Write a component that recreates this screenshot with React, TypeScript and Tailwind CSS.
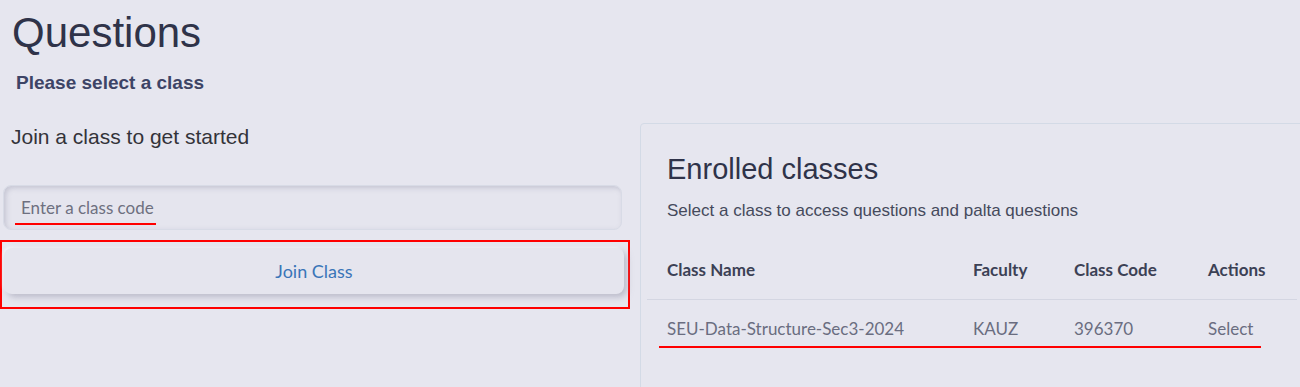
import React from "react";

export default function App() {
  const sans = { fontFamily: '"Liberation Sans", Arial, sans-serif' };
  const nun = { fontFamily: 'Lato, "Open Sans", sans-serif' };
  return (
    <div className="w-[1300px] h-[387px] overflow-hidden bg-[#e6e6ef]" style={sans}>
      <div className="pl-[12px] pt-[10px]">
        <h1 className="text-[42px] leading-[46px] text-[#2f3349]">Questions</h1>
        <p className="mt-[15px] pl-[4px] text-[19px] leading-[24px] font-bold text-[#3d4466]">Please select a class</p>
      </div>
      <div className="flex mt-[28px]">
        <div className="w-[640px] shrink-0">
          <div className="pl-[11px] pt-[2px] text-[21px] leading-[24px] text-[#333339]">Join a class to get started</div>
          <div className="mt-[36px] ml-[3px] w-[619px] h-[45px] rounded-[8px] border border-[#d8dbe6] bg-[#e5e5ee] shadow-[inset_2px_2px_5px_rgba(160,160,180,0.45)] flex items-center">
            <span className="relative ml-[17px] text-[17px] leading-[20px] text-[#6e7080]" style={nun}>
              Enter a class code
              <span className="absolute left-[-6px] right-[-2px] top-[25px] h-[2px] bg-[#ff0000]" />
            </span>
          </div>
          <div className="mt-[10px] w-[630px] h-[69px] border-2 border-[#ff0000] pt-[6px] pl-[2px]">
            <div className="w-[620px] h-[46px] rounded-[8px] bg-[#e5e5ee] shadow-[3px_3px_6px_rgba(150,150,170,0.55),-1px_-1px_3px_rgba(255,255,255,0.7)] flex items-center justify-center text-[18px] text-[#3a75b8]" style={nun}>
              Join Class
            </div>
          </div>
        </div>
        <div className="flex-1 -mr-[20px] h-[300px] rounded-[4px] border border-[#d3dae6] bg-[#e6e6ef] pl-[26px] pr-[26px] pt-[28px]">
          <h2 className="text-[29px] leading-[34px] text-[#2f3349]">Enrolled classes</h2>
          <p className="mt-[15px] text-[17px] leading-[20px] text-[#454a5c]">Select a class to access questions and palta questions</p>
          <div className="mt-[36px] -ml-[20px] w-[650px]" style={nun}>
            <div className="flex h-[42px] items-start pl-[20px] text-[17px] font-bold text-[#3c4155]">
              <span className="w-[306px]">Class Name</span>
              <span className="w-[101px]">Faculty</span>
              <span className="w-[134px]">Class Code</span>
              <span>Actions</span>
            </div>
            <div className="border-t border-[#d4d6e2]" />
            <div className="relative flex h-[58px] items-center pl-[20px] text-[17px] text-[#6a6d80]">
              <span className="w-[306px]">SEU-Data-Structure-Sec3-2024</span>
              <span className="w-[101px]">KAUZ</span>
              <span className="w-[134px]">396370</span>
              <span>Select</span>
              <span className="absolute left-[12px] w-[602px] top-[46px] h-[2px] bg-[#ff0000]" />
            </div>
          </div>
        </div>
      </div>
    </div>
  );
}
